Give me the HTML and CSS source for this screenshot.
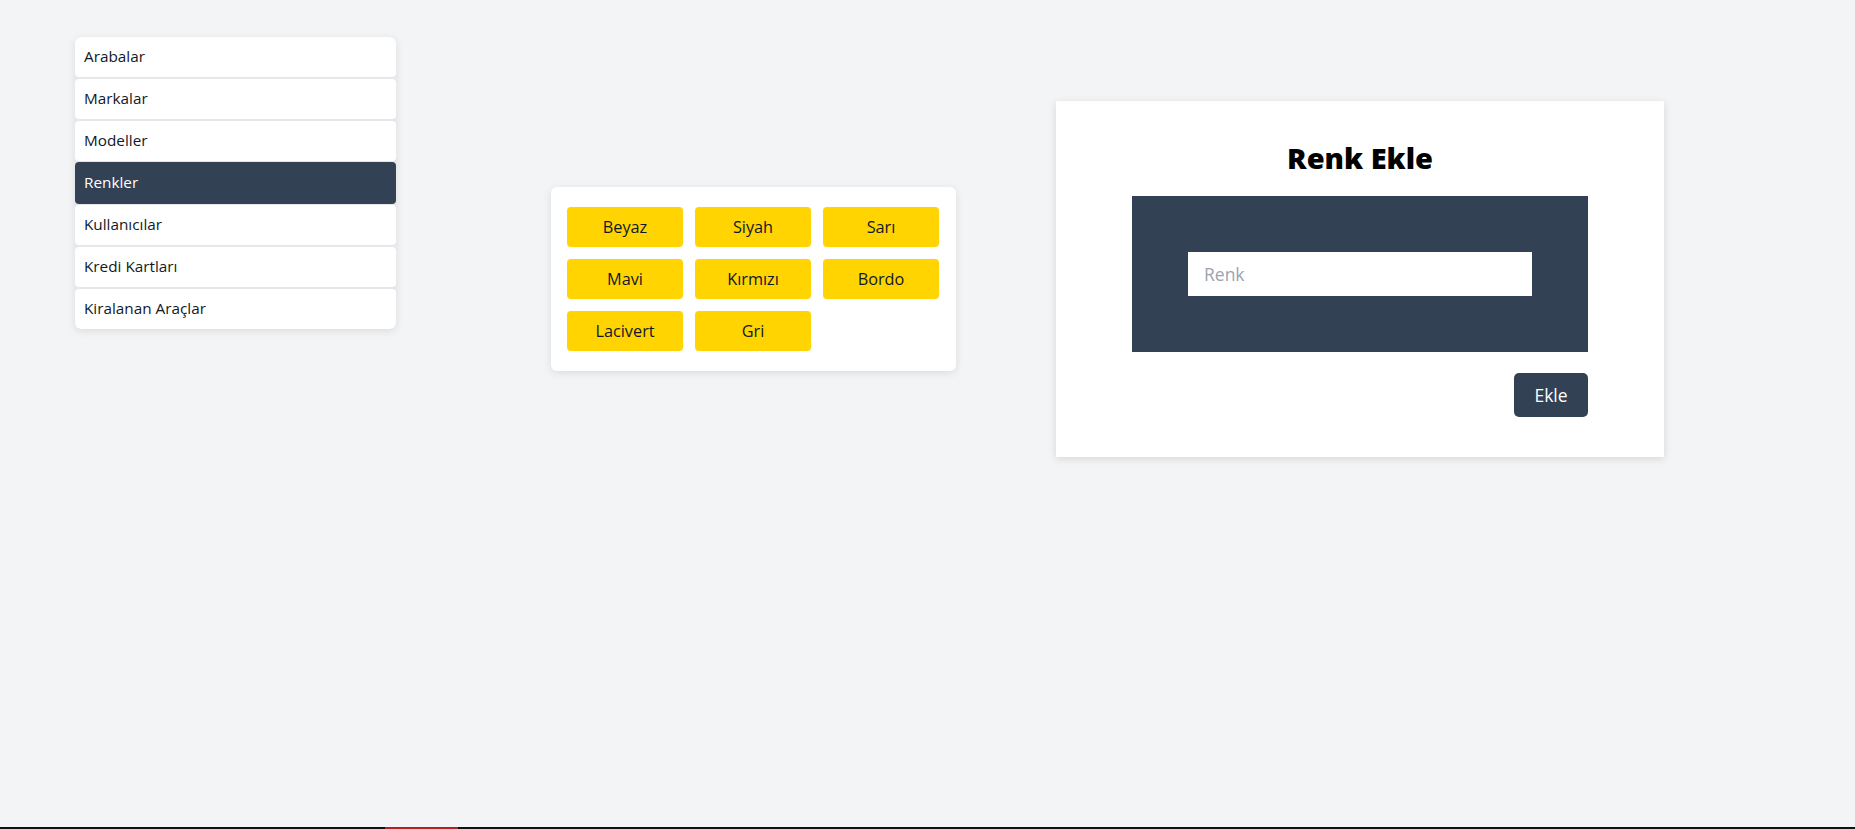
FILE: index.html
```html
<!DOCTYPE html>
<html lang="tr">
<head>
<meta charset="utf-8">
<title>Renk Ekle</title>
<link rel="stylesheet" href="styles.css">
</head>
<body>
<div class="page">
  <main class="layout">
    <nav class="sidebar">
      <a class="nav-item">Arabalar</a>
      <a class="nav-item">Markalar</a>
      <a class="nav-item">Modeller</a>
      <a class="nav-item active">Renkler</a>
      <a class="nav-item">Kullanıcılar</a>
      <a class="nav-item">Kredi Kartları</a>
      <a class="nav-item">Kiralanan Araçlar</a>
    </nav>
    <div class="content">
      <section class="colors-card">
        <button class="color-btn">Beyaz</button>
        <button class="color-btn">Siyah</button>
        <button class="color-btn">Sarı</button>
        <button class="color-btn">Mavi</button>
        <button class="color-btn">Kırmızı</button>
        <button class="color-btn">Bordo</button>
        <button class="color-btn">Lacivert</button>
        <button class="color-btn">Gri</button>
      </section>
      <section class="form-card">
        <h1 class="form-title">Renk Ekle</h1>
        <div class="form-box">
          <input class="form-input" type="text" placeholder="Renk">
        </div>
        <div class="form-actions">
          <button class="submit-btn">Ekle</button>
        </div>
      </section>
    </div>
  </main>
  <div class="bottom-bar"><span class="bottom-mark"></span></div>
</div>
</body>
</html>
```
FILE: styles.css
```css
* { box-sizing: border-box; }
html, body { margin: 0; padding: 0; }
body {
  background: #f3f4f6;
  font-family: "Open Sans", "Liberation Sans", sans-serif;
  color: #111827;
}
.page {
  min-height: 100vh;
  display: flex;
  flex-direction: column;
}
.layout {
  display: flex;
  align-items: flex-start;
  padding-top: 37px;
  padding-left: 75px;
}
.sidebar {
  width: 321px;
  background: #e5e7eb;
  border-radius: 6px;
  box-shadow: 0 2px 8px rgba(0,0,0,0.10);
  display: flex;
  flex-direction: column;
  gap: 2px;
  overflow: hidden;
}
.nav-item {
  display: flex;
  align-items: center;
  height: 40px;
  padding: 0 9px 2px;
  background: #ffffff;
  font-size: 15.3px;
  color: #111827;
  border-radius: 4px;
  cursor: pointer;
}
.nav-item:first-child { border-radius: 6px 6px 4px 4px; }
.nav-item:last-child { border-radius: 4px 4px 6px 6px; }
.nav-item.active {
  background: #334155;
  color: #ffffff;
  margin: -1px 0;
  height: 42px;
}
.content {
  display: flex;
  align-items: center;
  margin-top: 64px;
}
.colors-card {
  margin-left: 155px;
  width: 405px;
  background: #ffffff;
  border-radius: 6px;
  box-shadow: 0 2px 8px rgba(0,0,0,0.10);
  padding: 20px 16px;
  display: grid;
  grid-template-columns: repeat(3, 116px);
  grid-auto-rows: 40px;
  gap: 12px;
}
.color-btn {
  border: 0;
  border-radius: 4px;
  background: #ffd400;
  font-family: inherit;
  font-size: 16.3px;
  color: #111827;
  padding: 0;
}
.form-card {
  margin-left: 100px;
  width: 608px;
  height: 356px;
  background: #ffffff;
  box-shadow: 0 2px 8px rgba(0,0,0,0.12);
  padding: 35px 76px 0;
}
.form-title {
  margin: 0 0 17px;
  text-align: center;
  font-size: 29px;
  line-height: 43px;
  font-weight: 800;
  color: #000000;
}
.form-box {
  background: #334155;
  padding: 56px;
}
.form-input {
  display: block;
  width: 100%;
  height: 44px;
  border: 0;
  outline: none;
  padding: 0 16px;
  font-family: inherit;
  font-size: 17.5px;
  color: #111827;
}
.form-input::placeholder { color: #9ca3af; }
.form-actions {
  display: flex;
  justify-content: flex-end;
  margin-top: 21px;
}
.submit-btn {
  width: 74px;
  height: 44px;
  border: 0;
  border-radius: 5px;
  background: #334155;
  color: #ffffff;
  font-family: inherit;
  font-size: 17.5px;
}
.bottom-bar {
  margin-top: auto;
  height: 2px;
  background: #111111;
  display: flex;
}
.bottom-mark {
  margin-left: 385px;
  width: 73px;
  background: #b22222;
}
```
